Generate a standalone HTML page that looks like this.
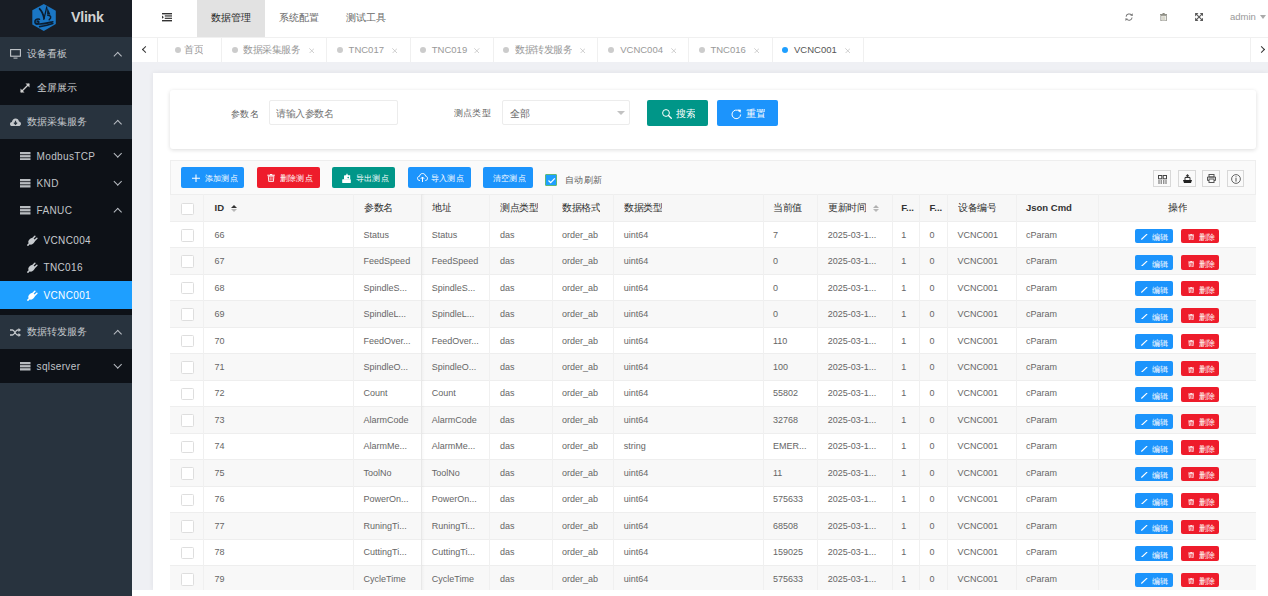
<!DOCTYPE html><html><head><meta charset="utf-8"><style>

*{box-sizing:border-box;margin:0;padding:0}
html,body{width:1268px;height:596px;overflow:hidden;background:#fff;font-family:"Liberation Sans",sans-serif}
.abs{position:absolute}
.t{position:absolute;white-space:nowrap;line-height:1}
#sb{position:absolute;left:0;top:0;width:132px;height:596px;background:#28333e}
.srow{position:absolute;left:0;width:132px}
.sico{position:absolute}
.chev{position:absolute;width:5.5px;height:5.5px;border-left:1px solid #b9bec4;border-top:1px solid #b9bec4}
.up{transform:rotate(45deg)}
.down{transform:rotate(225deg)}

</style></head><body>
<div id="sb">
<div class="abs" style="left:0;top:0;width:132px;height:37px;background:#181d25"></div>
<svg class="abs" style="left:31px;top:3px" width="26" height="29" viewBox="0 0 26 29">
<polygon points="12.8,1.1 24.8,7.85 24.8,20.9 12.8,27.9 1.3,21.4 1.3,7.35" fill="#1a76c4"/>
<g fill="none" stroke="#0b1d30" stroke-linecap="round">
<path d="M8.6,5.8 C10.6,7.8 12.2,10.8 13,15.2" stroke-width="1.8"/>
<path d="M15.7,4 C15,8 13.8,12 12.8,16.4" stroke-width="1.3"/>
<path d="M16.8,12.3 C19.6,12.6 21,14.2 18.2,16.8" stroke-width="1.5"/>
<path d="M8.4,16.2 C5.6,15.4 3.6,17.2 4,19.4 C4.4,21.2 6.8,21.4 7.6,19.6 C8,18.6 7.2,17.9 6.3,18.3" stroke-width="1.7"/>
<path d="M4.6,20.4 C9.5,22.2 15.5,20.4 21.8,18.8" stroke-width="1.7"/>
<path d="M8.6,23.6 C13.5,23.3 17.8,22 21.8,20.6" stroke-width="1.6"/>
</g>
<polygon points="16.3,4.6 19.4,11.4 16.1,11.4" fill="#0b1d30"/>
</svg>
<div class="t" style="left:71px;top:9.9px;font-size:14.3px;font-weight:bold;color:#d2d2d2;letter-spacing:-0.3px">Vlink</div>
<div class="srow" style="top:37px;height:34px;background:#28333e">
<svg class="sico" style="left:10px;top:12px" width="11" height="10" viewBox="0 0 11 10"><rect x="0.6" y="0.6" width="9.8" height="6.6" fill="none" stroke="#c4c8cc" stroke-width="1.1"/><rect x="3.5" y="8.6" width="4" height="1" fill="#c4c8cc"/></svg>
<div class="t" style="left:26.5px;top:12.3px;font-size:10px;color:#c4c8cc">设备看板</div>
<div class="chev up" style="left:115px;top:15.5px"></div>
</div>
<div class="srow" style="top:71px;height:34px;background:#0d1117">
<svg class="sico" style="left:20px;top:12px" width="10" height="10" viewBox="0 0 10 10"><path d="M1,9 L9,1" stroke="#d0d0d0" stroke-width="1.3"/><path d="M5.5,0.5 L9.5,0.5 L9.5,4.5 Z M0.5,5.5 L0.5,9.5 L4.5,9.5 Z" fill="#d0d0d0"/></svg>
<div class="t" style="left:36.5px;top:12.2px;font-size:10px;color:#d0d2d4">全屏展示</div>
</div>
<div class="srow" style="top:105px;height:34px;background:#28333e">
<svg class="sico" style="left:10px;top:117.8px;top:12.8px" width="11" height="8.2" viewBox="0 0 11 8.2"><path d="M2.4,8.2 C0.9,8.2 0,7.2 0,6 C0,4.9 0.8,4.1 1.9,4 C2.1,1.9 3.7,0.4 5.6,0.4 C7.4,0.4 8.7,1.6 9,3.4 C10.2,3.6 11,4.6 11,5.8 C11,7.2 10,8.2 8.6,8.2 Z" fill="#c4c8cc"/><path d="M5.5,2.8 L5.5,6.2 M3.9,4.7 L5.5,6.4 L7.1,4.7" stroke="#28333e" stroke-width="1.2" fill="none"/></svg>
<div class="t" style="left:26.5px;top:12.3px;font-size:10px;color:#c4c8cc">数据采集服务</div>
<div class="chev up" style="left:115px;top:15.5px"></div>
</div>
<div class="srow" style="top:139px;height:176px;background:#0d1117"></div>
<svg class="sico" style="left:20px;top:151.8px" width="10.5" height="8.5" viewBox="0 0 10.5 8.5"><rect x="0" y="0" width="10.5" height="2.3" fill="#b8bcc0"/><rect x="0" y="3.1" width="10.5" height="2.3" fill="#b8bcc0"/><rect x="0" y="6.2" width="10.5" height="2.3" fill="#b8bcc0"/></svg>
<div class="t" style="left:36.6px;top:151.60000000000002px;font-size:10px;letter-spacing:0.35px;color:#c0c4c8">ModbusTCP</div>
<div class="chev down" style="left:115px;top:151.3px"></div>
<svg class="sico" style="left:20px;top:179px" width="10.5" height="8.5" viewBox="0 0 10.5 8.5"><rect x="0" y="0" width="10.5" height="2.3" fill="#b8bcc0"/><rect x="0" y="3.1" width="10.5" height="2.3" fill="#b8bcc0"/><rect x="0" y="6.2" width="10.5" height="2.3" fill="#b8bcc0"/></svg>
<div class="t" style="left:36.6px;top:178.8px;font-size:10px;letter-spacing:0.35px;color:#c0c4c8">KND</div>
<div class="chev down" style="left:115px;top:178.5px"></div>
<svg class="sico" style="left:20px;top:206.3px" width="10.5" height="8.5" viewBox="0 0 10.5 8.5"><rect x="0" y="0" width="10.5" height="2.3" fill="#b8bcc0"/><rect x="0" y="3.1" width="10.5" height="2.3" fill="#b8bcc0"/><rect x="0" y="6.2" width="10.5" height="2.3" fill="#b8bcc0"/></svg>
<div class="t" style="left:36.6px;top:206.10000000000002px;font-size:10px;letter-spacing:0.35px;color:#c0c4c8">FANUC</div>
<div class="chev up" style="left:115px;top:208.8px"></div>
<svg class="sico" style="left:26.5px;top:235.0px" width="11" height="11" viewBox="0 0 11 11"><path d="M0.9,10.1 L3.2,7.8" stroke="#c8ccd0" stroke-width="1.5" stroke-linecap="round"/><ellipse cx="4.6" cy="6.3" rx="3.5" ry="2.8" transform="rotate(-45 4.6 6.3)" fill="#c8ccd0"/><path d="M5.4,3.8 L7.9,1.3 M7.4,5.8 L9.9,3.3" stroke="#c8ccd0" stroke-width="1.5" stroke-linecap="round"/></svg>
<div class="t" style="left:43.5px;top:236.1px;font-size:10px;letter-spacing:0.35px;color:#c8ccd0">VCNC004</div>
<svg class="sico" style="left:26.5px;top:262.0px" width="11" height="11" viewBox="0 0 11 11"><path d="M0.9,10.1 L3.2,7.8" stroke="#c8ccd0" stroke-width="1.5" stroke-linecap="round"/><ellipse cx="4.6" cy="6.3" rx="3.5" ry="2.8" transform="rotate(-45 4.6 6.3)" fill="#c8ccd0"/><path d="M5.4,3.8 L7.9,1.3 M7.4,5.8 L9.9,3.3" stroke="#c8ccd0" stroke-width="1.5" stroke-linecap="round"/></svg>
<div class="t" style="left:43.5px;top:263.1px;font-size:10px;letter-spacing:0.35px;color:#c8ccd0">TNC016</div>
<div class="srow" style="top:281px;height:28px;background:#1e9fff"></div>
<svg class="sico" style="left:26.5px;top:289.5px" width="11" height="11" viewBox="0 0 11 11"><path d="M0.9,10.1 L3.2,7.8" stroke="#ffffff" stroke-width="1.5" stroke-linecap="round"/><ellipse cx="4.6" cy="6.3" rx="3.5" ry="2.8" transform="rotate(-45 4.6 6.3)" fill="#ffffff"/><path d="M5.4,3.8 L7.9,1.3 M7.4,5.8 L9.9,3.3" stroke="#ffffff" stroke-width="1.5" stroke-linecap="round"/></svg>
<div class="t" style="left:43.5px;top:290.6px;font-size:10px;letter-spacing:0.35px;color:#fff">VCNC001</div>
<div class="srow" style="top:315px;height:34px;background:#28333e">
<svg class="sico" style="left:10px;top:12.5px" width="11" height="9" viewBox="0 0 11 9"><path d="M0,2 L2.5,2 C4.5,2 5.5,7 7.5,7 L9,7 M0,7 L2.5,7 C4.5,7 5.5,2 7.5,2 L9,2" stroke="#c4c8cc" stroke-width="1.3" fill="none"/><path d="M8.5,0 L11,2 L8.5,4 Z M8.5,5 L11,7 L8.5,9 Z" fill="#c4c8cc"/></svg>
<div class="t" style="left:26.5px;top:12.3px;font-size:10px;color:#c4c8cc">数据转发服务</div>
<div class="chev up" style="left:115px;top:15.5px"></div>
</div>
<div class="srow" style="top:349px;height:34px;background:#0d1117">
<svg class="sico" style="left:20px;top:13px" width="10.5" height="8.5" viewBox="0 0 10.5 8.5"><rect x="0" y="0" width="10.5" height="2.3" fill="#b8bcc0"/><rect x="0" y="3.1" width="10.5" height="2.3" fill="#b8bcc0"/><rect x="0" y="6.2" width="10.5" height="2.3" fill="#b8bcc0"/></svg>
<div class="t" style="left:36.6px;top:12.6px;font-size:10px;letter-spacing:0.35px;color:#c0c4c8">sqlserver</div>
<div class="chev down" style="left:115px;top:12.5px"></div>
</div>
</div>
<div class="abs" style="left:132px;top:0;width:1136px;height:38px;background:#fff;border-bottom:1px solid #f0f0f0"></div>
<svg class="abs" style="left:162px;top:13px" width="10" height="8.5" viewBox="0 0 10 8.5"><rect x="0" y="0" width="10" height="1.4" fill="#333"/><rect x="2.8" y="2.3" width="7.2" height="1.3" fill="#444"/><rect x="2.8" y="4.7" width="7.2" height="1.3" fill="#444"/><rect x="0" y="7" width="10" height="1.4" fill="#333"/><path d="M0,2.6 L1.9,4.2 L0,5.8 Z" fill="#333"/></svg>
<div class="abs" style="left:197px;top:0;width:68px;height:37px;background:#e2e2e2"></div>
<div class="t" style="left:210.5px;top:12.5px;font-size:10px;font-weight:500;color:#2a2a2a">数据管理</div>
<div class="t" style="left:278.5px;top:12.5px;font-size:10px;color:#666">系统配置</div>
<div class="t" style="left:346px;top:12.5px;font-size:10px;color:#666">测试工具</div>
<svg class="abs" style="left:1124.8px;top:12.8px" width="8.2" height="8.2" viewBox="0 0 9 9"><path d="M1.2,4 A3.4,3.4 0 0 1 7.3,2.4" stroke="#777" stroke-width="1.15" fill="none"/><path d="M7.8,5 A3.4,3.4 0 0 1 1.7,6.6" stroke="#777" stroke-width="1.15" fill="none"/><path d="M5.8,2.8 L8.6,3.2 L8.4,0.3 Z M3.2,6.2 L0.4,5.8 L0.6,8.7 Z" fill="#777"/></svg>
<svg class="abs" style="left:1160.2px;top:12.8px" width="7.2" height="8.1" viewBox="0 0 8 9"><rect x="0" y="1.2" width="8" height="1" fill="#8a8a80"/><rect x="2.8" y="0" width="2.4" height="1.5" fill="#8a8a80"/><rect x="1" y="2.6" width="6" height="6.2" fill="none" stroke="#8a8a80" stroke-width="1"/><rect x="2.3" y="3.6" width="3.4" height="4.2" fill="#d9d8cc"/></svg>
<svg class="abs" style="left:1194.6px;top:12.8px" width="8.2" height="8" viewBox="0 0 9 9"><path d="M1,1 L8,8 M8,1 L1,8" stroke="#5a5a5a" stroke-width="1.3"/><path d="M0,0 L3.8,0 L0,3.8 Z M9,0 L5.2,0 L9,3.8 Z M0,9 L3.8,9 L0,5.2 Z M9,9 L5.2,9 L9,5.2 Z" fill="#5a5a5a"/></svg>
<div class="t" style="left:1230px;top:12px;font-size:9.5px;color:#999">admin</div>
<div class="abs" style="left:1259.5px;top:14.5px;width:0;height:0;border-left:3.8px solid transparent;border-right:3.8px solid transparent;border-top:4px solid #aaa"></div>
<div class="abs" style="left:132px;top:38px;width:1136px;height:24px;background:#fff"></div>
<div class="abs" style="left:157px;top:38px;width:1px;height:24px;background:#f0f0f0"></div>
<div class="chev" style="left:142.5px;top:47px;width:5px;height:5px;border-color:#333;transform:rotate(-45deg)"></div>
<div class="abs" style="left:1250px;top:38px;width:1px;height:24px;background:#f0f0f0"></div>
<div class="chev" style="left:1259px;top:47px;width:5px;height:5px;border-color:#333;border-left:none;border-top:1px solid #333;border-right:1px solid #333;transform:rotate(45deg)"></div>
<div class="abs" style="left:221.3px;top:38px;width:1px;height:24px;background:#f0f0f0"></div>
<div class="abs" style="left:175px;top:46.6px;width:6px;height:6px;border-radius:50%;background:#ccc"></div>
<div class="t" style="left:183.79999999999998px;top:45px;font-size:10px;color:#999;transform:scale(0.9500);transform-origin:0 0">首页</div>
<div class="abs" style="left:326.4px;top:38px;width:1px;height:24px;background:#f0f0f0"></div>
<div class="abs" style="left:232px;top:46.6px;width:6px;height:6px;border-radius:50%;background:#ccc"></div>
<div class="t" style="left:243.0px;top:45px;font-size:10px;color:#999;transform:scale(0.9500);transform-origin:0 0">数据采集服务</div>
<svg class="abs" style="left:308.7px;top:47.6px" width="5.6" height="5.6" viewBox="0 0 5.6 5.6"><path d="M0.3,0.3 L5.3,5.3 M5.3,0.3 L0.3,5.3" stroke="#c4c4c4" stroke-width="0.8"/></svg>
<div class="abs" style="left:410px;top:38px;width:1px;height:24px;background:#f0f0f0"></div>
<div class="abs" style="left:337px;top:46.6px;width:6px;height:6px;border-radius:50%;background:#ccc"></div>
<div class="t" style="left:348.59999999999997px;top:45px;font-size:9.5px;color:#999">TNC017</div>
<svg class="abs" style="left:391.59999999999997px;top:47.6px" width="5.6" height="5.6" viewBox="0 0 5.6 5.6"><path d="M0.3,0.3 L5.3,5.3 M5.3,0.3 L0.3,5.3" stroke="#c4c4c4" stroke-width="0.8"/></svg>
<div class="abs" style="left:492.7px;top:38px;width:1px;height:24px;background:#f0f0f0"></div>
<div class="abs" style="left:420.3px;top:46.6px;width:6px;height:6px;border-radius:50%;background:#ccc"></div>
<div class="t" style="left:431.8px;top:45px;font-size:9.5px;color:#999">TNC019</div>
<svg class="abs" style="left:474.2px;top:47.6px" width="5.6" height="5.6" viewBox="0 0 5.6 5.6"><path d="M0.3,0.3 L5.3,5.3 M5.3,0.3 L0.3,5.3" stroke="#c4c4c4" stroke-width="0.8"/></svg>
<div class="abs" style="left:597.4px;top:38px;width:1px;height:24px;background:#f0f0f0"></div>
<div class="abs" style="left:503.2px;top:46.6px;width:6px;height:6px;border-radius:50%;background:#ccc"></div>
<div class="t" style="left:514.5px;top:45px;font-size:10px;color:#999;transform:scale(0.9500);transform-origin:0 0">数据转发服务</div>
<svg class="abs" style="left:579.7px;top:47.6px" width="5.6" height="5.6" viewBox="0 0 5.6 5.6"><path d="M0.3,0.3 L5.3,5.3 M5.3,0.3 L0.3,5.3" stroke="#c4c4c4" stroke-width="0.8"/></svg>
<div class="abs" style="left:688.2px;top:38px;width:1px;height:24px;background:#f0f0f0"></div>
<div class="abs" style="left:608.2px;top:46.6px;width:6px;height:6px;border-radius:50%;background:#ccc"></div>
<div class="t" style="left:620.2px;top:45px;font-size:9.5px;color:#999">VCNC004</div>
<svg class="abs" style="left:670.6px;top:47.6px" width="5.6" height="5.6" viewBox="0 0 5.6 5.6"><path d="M0.3,0.3 L5.3,5.3 M5.3,0.3 L0.3,5.3" stroke="#c4c4c4" stroke-width="0.8"/></svg>
<div class="abs" style="left:771.8px;top:38px;width:1px;height:24px;background:#f0f0f0"></div>
<div class="abs" style="left:699px;top:46.6px;width:6px;height:6px;border-radius:50%;background:#ccc"></div>
<div class="t" style="left:710.4000000000001px;top:45px;font-size:9.5px;color:#999">TNC016</div>
<svg class="abs" style="left:753.8000000000001px;top:47.6px" width="5.6" height="5.6" viewBox="0 0 5.6 5.6"><path d="M0.3,0.3 L5.3,5.3 M5.3,0.3 L0.3,5.3" stroke="#c4c4c4" stroke-width="0.8"/></svg>
<div class="abs" style="left:862.6px;top:38px;width:1px;height:24px;background:#f0f0f0"></div>
<div class="abs" style="left:782.4px;top:46.6px;width:6px;height:6px;border-radius:50%;background:#1e9fff"></div>
<div class="t" style="left:794.0px;top:45px;font-size:9.5px;color:#555">VCNC001</div>
<svg class="abs" style="left:844.7px;top:47.6px" width="5.6" height="5.6" viewBox="0 0 5.6 5.6"><path d="M0.3,0.3 L5.3,5.3 M5.3,0.3 L0.3,5.3" stroke="#c4c4c4" stroke-width="0.8"/></svg>
<div class="abs" style="left:132px;top:62px;width:1136px;height:528px;background:#eff0f4"></div>
<div class="abs" style="left:153px;top:73px;width:1115px;height:517px;background:#fff;box-shadow:0 0 5px rgba(0,10,40,0.07)"></div>
<div class="abs" style="left:170px;top:90px;width:1086px;height:59px;background:#fff;border-radius:3px;box-shadow:0 1px 4px rgba(0,0,0,0.14)"></div>
<div class="t" style="left:230.5px;top:109px;font-size:10px;color:#606060;transform:scale(0.9400);transform-origin:0 0">参数名</div>
<div class="abs" style="left:269px;top:100.3px;width:128.5px;height:25px;border:1px solid #ececec;border-radius:2px;background:#fff"></div>
<div class="t" style="left:276px;top:108.6px;font-size:10px;color:#757575;transform:scale(0.9500);transform-origin:0 0">请输入参数名</div>
<div class="t" style="left:453.6px;top:109px;font-size:10px;color:#606060;transform:scale(0.9200);transform-origin:0 0">测点类型</div>
<div class="abs" style="left:502.3px;top:100.3px;width:128px;height:25px;border:1px solid #ececec;border-radius:2px;background:#fff"></div>
<div class="t" style="left:509.5px;top:108.6px;font-size:10px;color:#666;transform:scale(0.9600);transform-origin:0 0">全部</div>
<div class="abs" style="left:616.5px;top:111px;width:0;height:0;border-left:4px solid transparent;border-right:4px solid transparent;border-top:4.5px solid #c2c2c2"></div>
<div class="abs" style="left:647.1px;top:100.1px;width:60.6px;height:25.8px;background:#009688;border-radius:2px"></div>
<svg class="abs" style="left:661.5px;top:108.6px" width="10" height="10" viewBox="0 0 10 10"><circle cx="4" cy="4" r="3.4" fill="none" stroke="#fff" stroke-width="1"/><path d="M6.5,6.5 L9.3,9.3" stroke="#fff" stroke-width="1.3" stroke-linecap="round"/></svg>
<div class="t" style="left:675.8px;top:108.8px;font-size:10px;color:#fff;transform:scale(0.9500);transform-origin:0 0">搜索</div>
<div class="abs" style="left:716.8px;top:100.1px;width:61px;height:25.8px;background:#1c94fc;border-radius:2px"></div>
<svg class="abs" style="left:731.2px;top:108.8px" width="11" height="11" viewBox="0 0 11 11"><path d="M9.6,5.5 A4.3,4.3 0 1 1 8.3,2.3" stroke="#fff" stroke-width="1" fill="none"/><path d="M6.6,0.6 L10,0.8 L9.4,4 Z" fill="#fff"/></svg>
<div class="t" style="left:746.2px;top:108.8px;font-size:10px;color:#fff;transform:scale(0.9500);transform-origin:0 0">重置</div>
<div class="abs" style="left:170.3px;top:160.2px;width:1085.7px;height:34px;background:#fafafa;border:1px solid #eeeeee;border-bottom:none"></div>
<div class="abs" style="left:181px;top:167.3px;width:63.30000000000001px;height:20.7px;background:#1c94fc;border-radius:2px"></div>
<svg class="abs" style="left:191.7px;top:173.8px" width="8" height="8" viewBox="0 0 8 8"><path d="M4,0.5 L4,8 M0,4.2 L8,4.2" stroke="#fff" stroke-width="1.05"/></svg>
<div class="t" style="left:205px;top:174.8px;font-size:9px;font-weight:500;color:#fff;transform:scale(0.9111);transform-origin:0 0">添加测点</div>
<div class="abs" style="left:256.6px;top:167.3px;width:63.5px;height:20.7px;background:#ee1c2b;border-radius:2px"></div>
<svg class="abs" style="left:266.6px;top:174px" width="8.2" height="8" viewBox="0 0 8.2 8"><path d="M0.3,1.2 L7.9,1.2" stroke="#fff" stroke-width="1"/><rect x="3" y="0" width="2.2" height="1" fill="#fff"/><path d="M1.3,2.2 L6.9,2.2 L6.4,7.6 L1.8,7.6 Z" fill="none" stroke="#fff" stroke-width="0.9"/><path d="M3.2,3.2 L3.2,6.6 M5,3.2 L5,6.6" stroke="#fff" stroke-width="0.7"/></svg>
<div class="t" style="left:279.8px;top:174.8px;font-size:9px;font-weight:500;color:#fff;transform:scale(0.9111);transform-origin:0 0">删除测点</div>
<div class="abs" style="left:332.4px;top:167.3px;width:63.0px;height:20.7px;background:#009688;border-radius:2px"></div>
<svg class="abs" style="left:342px;top:172.8px" width="9" height="10" viewBox="0 0 9 10"><rect x="0.2" y="6.2" width="8.6" height="3.8" rx="0.6" fill="#fff"/><path d="M2,6.4 L2,3.2 C2,2.6 2.4,2.2 3,2.2 L4,2.2 L5,0.3 L6,2.2 L8.2,2.2 L8.2,6.4 Z" fill="#fff"/><circle cx="6.2" cy="4.6" r="0.8" fill="#009688"/></svg>
<div class="t" style="left:355.5px;top:174.8px;font-size:9px;font-weight:500;color:#fff;transform:scale(0.9111);transform-origin:0 0">导出测点</div>
<div class="abs" style="left:407.8px;top:167.3px;width:62.80000000000001px;height:20.7px;background:#1c94fc;border-radius:2px"></div>
<svg class="abs" style="left:416.5px;top:173.3px" width="11" height="9" viewBox="0 0 11 9"><path d="M3,7.5 C1.3,7.5 0.5,6.5 0.5,5.3 C0.5,4 1.5,3.3 2.5,3.3 C2.8,1.5 4.1,0.5 5.6,0.5 C7.3,0.5 8.4,1.7 8.6,3.1 C9.7,3.2 10.5,4.1 10.5,5.3 C10.5,6.6 9.6,7.5 8.3,7.5" fill="none" stroke="#fff" stroke-width="1"/><path d="M5.5,4 L5.5,9 M3.8,5.8 L5.5,4 L7.2,5.8" stroke="#fff" stroke-width="1" fill="none"/></svg>
<div class="t" style="left:430.9px;top:174.8px;font-size:9px;font-weight:500;color:#fff;transform:scale(0.9111);transform-origin:0 0">导入测点</div>
<div class="abs" style="left:482.9px;top:167.3px;width:50.200000000000045px;height:20.7px;background:#1c94fc;border-radius:2px"></div>

<div class="t" style="left:493.3px;top:174.8px;font-size:9px;font-weight:500;color:#fff;transform:scale(0.9111);transform-origin:0 0">清空测点</div>
<div class="abs" style="left:545.4px;top:174.4px;width:12px;height:12px;background:#1e9fff;border:1px solid #5fb878;border-radius:1px"></div>
<svg class="abs" style="left:547px;top:176px" width="9" height="9" viewBox="0 0 9 9"><path d="M1.5,4.5 L3.7,6.7 L7.8,2.3" stroke="#fff" stroke-width="1.2" fill="none"/></svg>
<div class="t" style="left:564.8px;top:176.4px;font-size:10px;color:#5a5a5a;transform:scale(0.9300);transform-origin:0 0">自动刷新</div>
<div class="abs" style="left:1153.3px;top:170.2px;width:17.5px;height:17.3px;border:1px solid #d8d8d8;background:#fafafa"></div>
<div class="abs" style="left:1178.1px;top:170.2px;width:17.5px;height:17.3px;border:1px solid #d8d8d8;background:#fafafa"></div>
<div class="abs" style="left:1202.1px;top:170.2px;width:17.5px;height:17.3px;border:1px solid #d8d8d8;background:#fafafa"></div>
<div class="abs" style="left:1226.9px;top:170.2px;width:17.5px;height:17.3px;border:1px solid #d8d8d8;background:#fafafa"></div>
<svg class="abs" style="left:1158px;top:174.8px" width="9" height="9" viewBox="0 0 9 9"><rect x="0.5" y="0.5" width="3.3" height="3.3" fill="none" stroke="#444" stroke-width="1"/><rect x="5.2" y="0.5" width="3.3" height="3.3" fill="none" stroke="#444" stroke-width="1"/><path d="M1,5 L1,9 M3.2,5 L3.2,9 M5.8,5 L5.8,9 M8,5 L8,9" stroke="#555" stroke-width="0.9"/></svg>
<svg class="abs" style="left:1182.5px;top:174.3px" width="9" height="9" viewBox="0 0 9 9"><path d="M0,6 L9,6 L8,9 L1,9 Z" fill="#222"/><path d="M2,6 L2,3.5 L7,3.5 L7,6" fill="none" stroke="#333" stroke-width="1"/><path d="M4.5,0 L6.5,2.3 L5.2,2.3 L5.2,4 L3.8,4 L3.8,2.3 L2.5,2.3 Z" fill="#333"/></svg>
<svg class="abs" style="left:1206.5px;top:174.3px" width="9" height="9" viewBox="0 0 9 9"><rect x="2" y="0.5" width="5" height="2.5" fill="none" stroke="#555" stroke-width="1"/><path d="M2,6.5 L0.5,6.5 L0.5,3 L8.5,3 L8.5,6.5 L7,6.5" fill="none" stroke="#555" stroke-width="1"/><rect x="2" y="5" width="5" height="3.5" fill="none" stroke="#555" stroke-width="1"/></svg>
<svg class="abs" style="left:1230.8px;top:174px" width="10" height="10" viewBox="0 0 10 10"><circle cx="5" cy="5" r="4.4" fill="none" stroke="#555" stroke-width="0.9"/><rect x="4.5" y="4" width="1" height="3.6" fill="#555"/><rect x="4.5" y="2.3" width="1" height="1" fill="#555"/></svg>
<div class="abs" style="left:170.3px;top:194px;width:1085.7px;height:402px;border-left:1px solid #eee;border-right:1px solid #eee"></div>
<div class="abs" style="left:170.3px;top:194px;width:1085.7px;height:27px;background:#f7f7f7;border-top:1px solid #eee"></div>
<div class="abs" style="left:170.3px;top:221.0px;width:1085.7px;height:26.46px;background:#fff;border-top:1px solid #eee"></div>
<div class="abs" style="left:170.3px;top:247.46px;width:1085.7px;height:26.46px;background:#f8f8f8;border-top:1px solid #eee"></div>
<div class="abs" style="left:170.3px;top:273.92px;width:1085.7px;height:26.46px;background:#fff;border-top:1px solid #eee"></div>
<div class="abs" style="left:170.3px;top:300.38px;width:1085.7px;height:26.46px;background:#f8f8f8;border-top:1px solid #eee"></div>
<div class="abs" style="left:170.3px;top:326.84000000000003px;width:1085.7px;height:26.46px;background:#fff;border-top:1px solid #eee"></div>
<div class="abs" style="left:170.3px;top:353.3px;width:1085.7px;height:26.46px;background:#f8f8f8;border-top:1px solid #eee"></div>
<div class="abs" style="left:170.3px;top:379.76px;width:1085.7px;height:26.46px;background:#fff;border-top:1px solid #eee"></div>
<div class="abs" style="left:170.3px;top:406.22px;width:1085.7px;height:26.46px;background:#f8f8f8;border-top:1px solid #eee"></div>
<div class="abs" style="left:170.3px;top:432.68px;width:1085.7px;height:26.46px;background:#fff;border-top:1px solid #eee"></div>
<div class="abs" style="left:170.3px;top:459.14px;width:1085.7px;height:26.46px;background:#f8f8f8;border-top:1px solid #eee"></div>
<div class="abs" style="left:170.3px;top:485.6px;width:1085.7px;height:26.46px;background:#fff;border-top:1px solid #eee"></div>
<div class="abs" style="left:170.3px;top:512.06px;width:1085.7px;height:26.46px;background:#f8f8f8;border-top:1px solid #eee"></div>
<div class="abs" style="left:170.3px;top:538.52px;width:1085.7px;height:26.46px;background:#fff;border-top:1px solid #eee"></div>
<div class="abs" style="left:170.3px;top:564.98px;width:1085.7px;height:25.019999999999982px;background:#f8f8f8;border-top:1px solid #eee"></div>
<div class="abs" style="left:203px;top:194px;width:1px;height:396px;background:#f0f0f0"></div>
<div class="abs" style="left:353px;top:194px;width:1px;height:396px;background:#f0f0f0"></div>
<div class="abs" style="left:421px;top:194px;width:1px;height:396px;background:#f0f0f0"></div>
<div class="abs" style="left:489.3px;top:194px;width:1px;height:396px;background:#f0f0f0"></div>
<div class="abs" style="left:551.7px;top:194px;width:1px;height:396px;background:#f0f0f0"></div>
<div class="abs" style="left:613.2px;top:194px;width:1px;height:396px;background:#f0f0f0"></div>
<div class="abs" style="left:762.5px;top:194px;width:1px;height:396px;background:#f0f0f0"></div>
<div class="abs" style="left:817px;top:194px;width:1px;height:396px;background:#f0f0f0"></div>
<div class="abs" style="left:891.8px;top:194px;width:1px;height:396px;background:#f0f0f0"></div>
<div class="abs" style="left:919.2px;top:194px;width:1px;height:396px;background:#f0f0f0"></div>
<div class="abs" style="left:947.2px;top:194px;width:1px;height:396px;background:#f0f0f0"></div>
<div class="abs" style="left:1015.5px;top:194px;width:1px;height:396px;background:#f0f0f0"></div>
<div class="abs" style="left:1097.8px;top:194px;width:1px;height:396px;background:#f0f0f0"></div>
<div class="abs" style="left:421px;top:194px;width:4px;height:396px;background:linear-gradient(to right,rgba(0,0,0,0.04),rgba(0,0,0,0))"></div>
<div class="abs" style="left:181px;top:202.5px;width:12.7px;height:12.5px;border:1px solid #dedede;background:#fff;border-radius:1.5px"></div>
<div class="t" style="left:214.6px;top:202.5px;font-size:9.5px;font-weight:bold;color:#333">ID</div>
<div class="t" style="left:363.6px;top:202.5px;font-size:10px;font-weight:500;color:#333;transform:scale(0.9500);transform-origin:0 0">参数名</div>
<div class="t" style="left:431.8px;top:202.5px;font-size:10px;font-weight:500;color:#333;transform:scale(0.9500);transform-origin:0 0">地址</div>
<div class="t" style="left:499.9px;top:202.5px;font-size:10px;font-weight:500;color:#333;transform:scale(0.9500);transform-origin:0 0">测点类型</div>
<div class="t" style="left:562px;top:202.5px;font-size:10px;font-weight:500;color:#333;transform:scale(0.9500);transform-origin:0 0">数据格式</div>
<div class="t" style="left:623.7px;top:202.5px;font-size:10px;font-weight:500;color:#333;transform:scale(0.9500);transform-origin:0 0">数据类型</div>
<div class="t" style="left:772.9px;top:202.5px;font-size:10px;font-weight:500;color:#333;transform:scale(0.9500);transform-origin:0 0">当前值</div>
<div class="t" style="left:827.8px;top:202.5px;font-size:10px;font-weight:500;color:#333;transform:scale(0.9500);transform-origin:0 0">更新时间</div>
<div class="t" style="left:901.3px;top:202.5px;font-size:9.5px;font-weight:bold;color:#333">F...</div>
<div class="t" style="left:929.6px;top:202.5px;font-size:9.5px;font-weight:bold;color:#333">F...</div>
<div class="t" style="left:957.6px;top:202.5px;font-size:10px;font-weight:500;color:#333;transform:scale(0.9500);transform-origin:0 0">设备编号</div>
<div class="t" style="left:1026px;top:202.5px;font-size:9.5px;font-weight:bold;color:#333">Json Cmd</div>
<div class="t" style="left:1167.5px;top:202.5px;font-size:10px;font-weight:500;color:#333;transform:scale(0.9500);transform-origin:0 0">操作</div>
<div class="abs" style="left:231px;top:204.5px;width:0;height:0;border-left:3.3px solid transparent;border-right:3.3px solid transparent;border-bottom:3.5px solid #333"></div>
<div class="abs" style="left:231px;top:208.8px;width:0;height:0;border-left:3.3px solid transparent;border-right:3.3px solid transparent;border-top:3.5px solid #b8b8b8"></div>
<div class="abs" style="left:872.5px;top:204.5px;width:0;height:0;border-left:3.3px solid transparent;border-right:3.3px solid transparent;border-bottom:3.5px solid #b0b0b0"></div>
<div class="abs" style="left:872.5px;top:208.8px;width:0;height:0;border-left:3.3px solid transparent;border-right:3.3px solid transparent;border-top:3.5px solid #b8b8b8"></div>
<div class="abs" style="left:181.3px;top:229.03px;width:12.7px;height:12.5px;border:1px solid #dedede;background:#fff;border-radius:1.5px"></div>
<div class="t" style="left:214.6px;top:230.73px;font-size:9px;color:#666">66</div>
<div class="t" style="left:363.6px;top:230.73px;font-size:9px;color:#666">Status</div>
<div class="t" style="left:431.8px;top:230.73px;font-size:9px;color:#666">Status</div>
<div class="t" style="left:499.9px;top:230.73px;font-size:9px;color:#666">das</div>
<div class="t" style="left:562px;top:230.73px;font-size:9px;color:#666">order_ab</div>
<div class="t" style="left:623.7px;top:230.73px;font-size:9px;color:#666">uint64</div>
<div class="t" style="left:772.9px;top:230.73px;font-size:9px;color:#666">7</div>
<div class="t" style="left:827.8px;top:230.73px;font-size:9px;color:#666">2025-03-1...</div>
<div class="t" style="left:901.3px;top:230.73px;font-size:9px;color:#666">1</div>
<div class="t" style="left:929.6px;top:230.73px;font-size:9px;color:#666">0</div>
<div class="t" style="left:957.6px;top:230.73px;font-size:9px;color:#666">VCNC001</div>
<div class="t" style="left:1026px;top:230.73px;font-size:9px;color:#666">cParam</div>
<div class="abs" style="left:1134.5px;top:228.53px;width:38px;height:14.8px;background:#1c94fc;border-radius:2px"></div>
<svg class="abs" style="left:1141px;top:234.33px" width="6.5" height="5.5" viewBox="0 0 6.5 5.5"><path d="M0.6,5.2 L5.8,0.4" stroke="#fff" stroke-width="1.2" stroke-linecap="round"/></svg>
<div class="t" style="left:1152px;top:234.13px;font-size:9px;font-weight:500;color:#fff;transform:scale(0.9222);transform-origin:0 0">编辑</div>
<div class="abs" style="left:1181.3px;top:228.53px;width:38px;height:14.8px;background:#ee1c2b;border-radius:2px"></div>
<svg class="abs" style="left:1187.7px;top:234.33px" width="6.4" height="6" viewBox="0 0 6.4 6"><path d="M0.2,1 L6.2,1" stroke="#fff" stroke-width="0.9"/><rect x="2.3" y="0" width="1.8" height="0.8" fill="#fff"/><path d="M1,1.8 L5.4,1.8 L5,6 L1.4,6 Z" fill="none" stroke="#fff" stroke-width="0.8"/><path d="M2.5,2.6 L2.5,5.2 M3.9,2.6 L3.9,5.2" stroke="#fff" stroke-width="0.6"/></svg>
<div class="t" style="left:1198.7px;top:234.13px;font-size:9px;font-weight:500;color:#fff;transform:scale(0.9222);transform-origin:0 0">删除</div>
<div class="abs" style="left:181.3px;top:255.49px;width:12.7px;height:12.5px;border:1px solid #dedede;background:#fff;border-radius:1.5px"></div>
<div class="t" style="left:214.6px;top:257.19px;font-size:9px;color:#666">67</div>
<div class="t" style="left:363.6px;top:257.19px;font-size:9px;color:#666">FeedSpeed</div>
<div class="t" style="left:431.8px;top:257.19px;font-size:9px;color:#666">FeedSpeed</div>
<div class="t" style="left:499.9px;top:257.19px;font-size:9px;color:#666">das</div>
<div class="t" style="left:562px;top:257.19px;font-size:9px;color:#666">order_ab</div>
<div class="t" style="left:623.7px;top:257.19px;font-size:9px;color:#666">uint64</div>
<div class="t" style="left:772.9px;top:257.19px;font-size:9px;color:#666">0</div>
<div class="t" style="left:827.8px;top:257.19px;font-size:9px;color:#666">2025-03-1...</div>
<div class="t" style="left:901.3px;top:257.19px;font-size:9px;color:#666">1</div>
<div class="t" style="left:929.6px;top:257.19px;font-size:9px;color:#666">0</div>
<div class="t" style="left:957.6px;top:257.19px;font-size:9px;color:#666">VCNC001</div>
<div class="t" style="left:1026px;top:257.19px;font-size:9px;color:#666">cParam</div>
<div class="abs" style="left:1134.5px;top:254.99px;width:38px;height:14.8px;background:#1c94fc;border-radius:2px"></div>
<svg class="abs" style="left:1141px;top:260.79px" width="6.5" height="5.5" viewBox="0 0 6.5 5.5"><path d="M0.6,5.2 L5.8,0.4" stroke="#fff" stroke-width="1.2" stroke-linecap="round"/></svg>
<div class="t" style="left:1152px;top:260.59000000000003px;font-size:9px;font-weight:500;color:#fff;transform:scale(0.9222);transform-origin:0 0">编辑</div>
<div class="abs" style="left:1181.3px;top:254.99px;width:38px;height:14.8px;background:#ee1c2b;border-radius:2px"></div>
<svg class="abs" style="left:1187.7px;top:260.79px" width="6.4" height="6" viewBox="0 0 6.4 6"><path d="M0.2,1 L6.2,1" stroke="#fff" stroke-width="0.9"/><rect x="2.3" y="0" width="1.8" height="0.8" fill="#fff"/><path d="M1,1.8 L5.4,1.8 L5,6 L1.4,6 Z" fill="none" stroke="#fff" stroke-width="0.8"/><path d="M2.5,2.6 L2.5,5.2 M3.9,2.6 L3.9,5.2" stroke="#fff" stroke-width="0.6"/></svg>
<div class="t" style="left:1198.7px;top:260.59000000000003px;font-size:9px;font-weight:500;color:#fff;transform:scale(0.9222);transform-origin:0 0">删除</div>
<div class="abs" style="left:181.3px;top:281.95000000000005px;width:12.7px;height:12.5px;border:1px solid #dedede;background:#fff;border-radius:1.5px"></div>
<div class="t" style="left:214.6px;top:283.65000000000003px;font-size:9px;color:#666">68</div>
<div class="t" style="left:363.6px;top:283.65000000000003px;font-size:9px;color:#666">SpindleS...</div>
<div class="t" style="left:431.8px;top:283.65000000000003px;font-size:9px;color:#666">SpindleS...</div>
<div class="t" style="left:499.9px;top:283.65000000000003px;font-size:9px;color:#666">das</div>
<div class="t" style="left:562px;top:283.65000000000003px;font-size:9px;color:#666">order_ab</div>
<div class="t" style="left:623.7px;top:283.65000000000003px;font-size:9px;color:#666">uint64</div>
<div class="t" style="left:772.9px;top:283.65000000000003px;font-size:9px;color:#666">0</div>
<div class="t" style="left:827.8px;top:283.65000000000003px;font-size:9px;color:#666">2025-03-1...</div>
<div class="t" style="left:901.3px;top:283.65000000000003px;font-size:9px;color:#666">1</div>
<div class="t" style="left:929.6px;top:283.65000000000003px;font-size:9px;color:#666">0</div>
<div class="t" style="left:957.6px;top:283.65000000000003px;font-size:9px;color:#666">VCNC001</div>
<div class="t" style="left:1026px;top:283.65000000000003px;font-size:9px;color:#666">cParam</div>
<div class="abs" style="left:1134.5px;top:281.45000000000005px;width:38px;height:14.8px;background:#1c94fc;border-radius:2px"></div>
<svg class="abs" style="left:1141px;top:287.25000000000006px" width="6.5" height="5.5" viewBox="0 0 6.5 5.5"><path d="M0.6,5.2 L5.8,0.4" stroke="#fff" stroke-width="1.2" stroke-linecap="round"/></svg>
<div class="t" style="left:1152px;top:287.05000000000007px;font-size:9px;font-weight:500;color:#fff;transform:scale(0.9222);transform-origin:0 0">编辑</div>
<div class="abs" style="left:1181.3px;top:281.45000000000005px;width:38px;height:14.8px;background:#ee1c2b;border-radius:2px"></div>
<svg class="abs" style="left:1187.7px;top:287.25000000000006px" width="6.4" height="6" viewBox="0 0 6.4 6"><path d="M0.2,1 L6.2,1" stroke="#fff" stroke-width="0.9"/><rect x="2.3" y="0" width="1.8" height="0.8" fill="#fff"/><path d="M1,1.8 L5.4,1.8 L5,6 L1.4,6 Z" fill="none" stroke="#fff" stroke-width="0.8"/><path d="M2.5,2.6 L2.5,5.2 M3.9,2.6 L3.9,5.2" stroke="#fff" stroke-width="0.6"/></svg>
<div class="t" style="left:1198.7px;top:287.05000000000007px;font-size:9px;font-weight:500;color:#fff;transform:scale(0.9222);transform-origin:0 0">删除</div>
<div class="abs" style="left:181.3px;top:308.41px;width:12.7px;height:12.5px;border:1px solid #dedede;background:#fff;border-radius:1.5px"></div>
<div class="t" style="left:214.6px;top:310.11px;font-size:9px;color:#666">69</div>
<div class="t" style="left:363.6px;top:310.11px;font-size:9px;color:#666">SpindleL...</div>
<div class="t" style="left:431.8px;top:310.11px;font-size:9px;color:#666">SpindleL...</div>
<div class="t" style="left:499.9px;top:310.11px;font-size:9px;color:#666">das</div>
<div class="t" style="left:562px;top:310.11px;font-size:9px;color:#666">order_ab</div>
<div class="t" style="left:623.7px;top:310.11px;font-size:9px;color:#666">uint64</div>
<div class="t" style="left:772.9px;top:310.11px;font-size:9px;color:#666">0</div>
<div class="t" style="left:827.8px;top:310.11px;font-size:9px;color:#666">2025-03-1...</div>
<div class="t" style="left:901.3px;top:310.11px;font-size:9px;color:#666">1</div>
<div class="t" style="left:929.6px;top:310.11px;font-size:9px;color:#666">0</div>
<div class="t" style="left:957.6px;top:310.11px;font-size:9px;color:#666">VCNC001</div>
<div class="t" style="left:1026px;top:310.11px;font-size:9px;color:#666">cParam</div>
<div class="abs" style="left:1134.5px;top:307.91px;width:38px;height:14.8px;background:#1c94fc;border-radius:2px"></div>
<svg class="abs" style="left:1141px;top:313.71000000000004px" width="6.5" height="5.5" viewBox="0 0 6.5 5.5"><path d="M0.6,5.2 L5.8,0.4" stroke="#fff" stroke-width="1.2" stroke-linecap="round"/></svg>
<div class="t" style="left:1152px;top:313.51000000000005px;font-size:9px;font-weight:500;color:#fff;transform:scale(0.9222);transform-origin:0 0">编辑</div>
<div class="abs" style="left:1181.3px;top:307.91px;width:38px;height:14.8px;background:#ee1c2b;border-radius:2px"></div>
<svg class="abs" style="left:1187.7px;top:313.71000000000004px" width="6.4" height="6" viewBox="0 0 6.4 6"><path d="M0.2,1 L6.2,1" stroke="#fff" stroke-width="0.9"/><rect x="2.3" y="0" width="1.8" height="0.8" fill="#fff"/><path d="M1,1.8 L5.4,1.8 L5,6 L1.4,6 Z" fill="none" stroke="#fff" stroke-width="0.8"/><path d="M2.5,2.6 L2.5,5.2 M3.9,2.6 L3.9,5.2" stroke="#fff" stroke-width="0.6"/></svg>
<div class="t" style="left:1198.7px;top:313.51000000000005px;font-size:9px;font-weight:500;color:#fff;transform:scale(0.9222);transform-origin:0 0">删除</div>
<div class="abs" style="left:181.3px;top:334.87000000000006px;width:12.7px;height:12.5px;border:1px solid #dedede;background:#fff;border-radius:1.5px"></div>
<div class="t" style="left:214.6px;top:336.57000000000005px;font-size:9px;color:#666">70</div>
<div class="t" style="left:363.6px;top:336.57000000000005px;font-size:9px;color:#666">FeedOver...</div>
<div class="t" style="left:431.8px;top:336.57000000000005px;font-size:9px;color:#666">FeedOver...</div>
<div class="t" style="left:499.9px;top:336.57000000000005px;font-size:9px;color:#666">das</div>
<div class="t" style="left:562px;top:336.57000000000005px;font-size:9px;color:#666">order_ab</div>
<div class="t" style="left:623.7px;top:336.57000000000005px;font-size:9px;color:#666">uint64</div>
<div class="t" style="left:772.9px;top:336.57000000000005px;font-size:9px;color:#666">110</div>
<div class="t" style="left:827.8px;top:336.57000000000005px;font-size:9px;color:#666">2025-03-1...</div>
<div class="t" style="left:901.3px;top:336.57000000000005px;font-size:9px;color:#666">1</div>
<div class="t" style="left:929.6px;top:336.57000000000005px;font-size:9px;color:#666">0</div>
<div class="t" style="left:957.6px;top:336.57000000000005px;font-size:9px;color:#666">VCNC001</div>
<div class="t" style="left:1026px;top:336.57000000000005px;font-size:9px;color:#666">cParam</div>
<div class="abs" style="left:1134.5px;top:334.37000000000006px;width:38px;height:14.8px;background:#1c94fc;border-radius:2px"></div>
<svg class="abs" style="left:1141px;top:340.1700000000001px" width="6.5" height="5.5" viewBox="0 0 6.5 5.5"><path d="M0.6,5.2 L5.8,0.4" stroke="#fff" stroke-width="1.2" stroke-linecap="round"/></svg>
<div class="t" style="left:1152px;top:339.9700000000001px;font-size:9px;font-weight:500;color:#fff;transform:scale(0.9222);transform-origin:0 0">编辑</div>
<div class="abs" style="left:1181.3px;top:334.37000000000006px;width:38px;height:14.8px;background:#ee1c2b;border-radius:2px"></div>
<svg class="abs" style="left:1187.7px;top:340.1700000000001px" width="6.4" height="6" viewBox="0 0 6.4 6"><path d="M0.2,1 L6.2,1" stroke="#fff" stroke-width="0.9"/><rect x="2.3" y="0" width="1.8" height="0.8" fill="#fff"/><path d="M1,1.8 L5.4,1.8 L5,6 L1.4,6 Z" fill="none" stroke="#fff" stroke-width="0.8"/><path d="M2.5,2.6 L2.5,5.2 M3.9,2.6 L3.9,5.2" stroke="#fff" stroke-width="0.6"/></svg>
<div class="t" style="left:1198.7px;top:339.9700000000001px;font-size:9px;font-weight:500;color:#fff;transform:scale(0.9222);transform-origin:0 0">删除</div>
<div class="abs" style="left:181.3px;top:361.33000000000004px;width:12.7px;height:12.5px;border:1px solid #dedede;background:#fff;border-radius:1.5px"></div>
<div class="t" style="left:214.6px;top:363.03000000000003px;font-size:9px;color:#666">71</div>
<div class="t" style="left:363.6px;top:363.03000000000003px;font-size:9px;color:#666">SpindleO...</div>
<div class="t" style="left:431.8px;top:363.03000000000003px;font-size:9px;color:#666">SpindleO...</div>
<div class="t" style="left:499.9px;top:363.03000000000003px;font-size:9px;color:#666">das</div>
<div class="t" style="left:562px;top:363.03000000000003px;font-size:9px;color:#666">order_ab</div>
<div class="t" style="left:623.7px;top:363.03000000000003px;font-size:9px;color:#666">uint64</div>
<div class="t" style="left:772.9px;top:363.03000000000003px;font-size:9px;color:#666">100</div>
<div class="t" style="left:827.8px;top:363.03000000000003px;font-size:9px;color:#666">2025-03-1...</div>
<div class="t" style="left:901.3px;top:363.03000000000003px;font-size:9px;color:#666">1</div>
<div class="t" style="left:929.6px;top:363.03000000000003px;font-size:9px;color:#666">0</div>
<div class="t" style="left:957.6px;top:363.03000000000003px;font-size:9px;color:#666">VCNC001</div>
<div class="t" style="left:1026px;top:363.03000000000003px;font-size:9px;color:#666">cParam</div>
<div class="abs" style="left:1134.5px;top:360.83000000000004px;width:38px;height:14.8px;background:#1c94fc;border-radius:2px"></div>
<svg class="abs" style="left:1141px;top:366.63000000000005px" width="6.5" height="5.5" viewBox="0 0 6.5 5.5"><path d="M0.6,5.2 L5.8,0.4" stroke="#fff" stroke-width="1.2" stroke-linecap="round"/></svg>
<div class="t" style="left:1152px;top:366.43000000000006px;font-size:9px;font-weight:500;color:#fff;transform:scale(0.9222);transform-origin:0 0">编辑</div>
<div class="abs" style="left:1181.3px;top:360.83000000000004px;width:38px;height:14.8px;background:#ee1c2b;border-radius:2px"></div>
<svg class="abs" style="left:1187.7px;top:366.63000000000005px" width="6.4" height="6" viewBox="0 0 6.4 6"><path d="M0.2,1 L6.2,1" stroke="#fff" stroke-width="0.9"/><rect x="2.3" y="0" width="1.8" height="0.8" fill="#fff"/><path d="M1,1.8 L5.4,1.8 L5,6 L1.4,6 Z" fill="none" stroke="#fff" stroke-width="0.8"/><path d="M2.5,2.6 L2.5,5.2 M3.9,2.6 L3.9,5.2" stroke="#fff" stroke-width="0.6"/></svg>
<div class="t" style="left:1198.7px;top:366.43000000000006px;font-size:9px;font-weight:500;color:#fff;transform:scale(0.9222);transform-origin:0 0">删除</div>
<div class="abs" style="left:181.3px;top:387.79px;width:12.7px;height:12.5px;border:1px solid #dedede;background:#fff;border-radius:1.5px"></div>
<div class="t" style="left:214.6px;top:389.49px;font-size:9px;color:#666">72</div>
<div class="t" style="left:363.6px;top:389.49px;font-size:9px;color:#666">Count</div>
<div class="t" style="left:431.8px;top:389.49px;font-size:9px;color:#666">Count</div>
<div class="t" style="left:499.9px;top:389.49px;font-size:9px;color:#666">das</div>
<div class="t" style="left:562px;top:389.49px;font-size:9px;color:#666">order_ab</div>
<div class="t" style="left:623.7px;top:389.49px;font-size:9px;color:#666">uint64</div>
<div class="t" style="left:772.9px;top:389.49px;font-size:9px;color:#666">55802</div>
<div class="t" style="left:827.8px;top:389.49px;font-size:9px;color:#666">2025-03-1...</div>
<div class="t" style="left:901.3px;top:389.49px;font-size:9px;color:#666">1</div>
<div class="t" style="left:929.6px;top:389.49px;font-size:9px;color:#666">0</div>
<div class="t" style="left:957.6px;top:389.49px;font-size:9px;color:#666">VCNC001</div>
<div class="t" style="left:1026px;top:389.49px;font-size:9px;color:#666">cParam</div>
<div class="abs" style="left:1134.5px;top:387.29px;width:38px;height:14.8px;background:#1c94fc;border-radius:2px"></div>
<svg class="abs" style="left:1141px;top:393.09000000000003px" width="6.5" height="5.5" viewBox="0 0 6.5 5.5"><path d="M0.6,5.2 L5.8,0.4" stroke="#fff" stroke-width="1.2" stroke-linecap="round"/></svg>
<div class="t" style="left:1152px;top:392.89000000000004px;font-size:9px;font-weight:500;color:#fff;transform:scale(0.9222);transform-origin:0 0">编辑</div>
<div class="abs" style="left:1181.3px;top:387.29px;width:38px;height:14.8px;background:#ee1c2b;border-radius:2px"></div>
<svg class="abs" style="left:1187.7px;top:393.09000000000003px" width="6.4" height="6" viewBox="0 0 6.4 6"><path d="M0.2,1 L6.2,1" stroke="#fff" stroke-width="0.9"/><rect x="2.3" y="0" width="1.8" height="0.8" fill="#fff"/><path d="M1,1.8 L5.4,1.8 L5,6 L1.4,6 Z" fill="none" stroke="#fff" stroke-width="0.8"/><path d="M2.5,2.6 L2.5,5.2 M3.9,2.6 L3.9,5.2" stroke="#fff" stroke-width="0.6"/></svg>
<div class="t" style="left:1198.7px;top:392.89000000000004px;font-size:9px;font-weight:500;color:#fff;transform:scale(0.9222);transform-origin:0 0">删除</div>
<div class="abs" style="left:181.3px;top:414.25000000000006px;width:12.7px;height:12.5px;border:1px solid #dedede;background:#fff;border-radius:1.5px"></div>
<div class="t" style="left:214.6px;top:415.95000000000005px;font-size:9px;color:#666">73</div>
<div class="t" style="left:363.6px;top:415.95000000000005px;font-size:9px;color:#666">AlarmCode</div>
<div class="t" style="left:431.8px;top:415.95000000000005px;font-size:9px;color:#666">AlarmCode</div>
<div class="t" style="left:499.9px;top:415.95000000000005px;font-size:9px;color:#666">das</div>
<div class="t" style="left:562px;top:415.95000000000005px;font-size:9px;color:#666">order_ab</div>
<div class="t" style="left:623.7px;top:415.95000000000005px;font-size:9px;color:#666">uint64</div>
<div class="t" style="left:772.9px;top:415.95000000000005px;font-size:9px;color:#666">32768</div>
<div class="t" style="left:827.8px;top:415.95000000000005px;font-size:9px;color:#666">2025-03-1...</div>
<div class="t" style="left:901.3px;top:415.95000000000005px;font-size:9px;color:#666">1</div>
<div class="t" style="left:929.6px;top:415.95000000000005px;font-size:9px;color:#666">0</div>
<div class="t" style="left:957.6px;top:415.95000000000005px;font-size:9px;color:#666">VCNC001</div>
<div class="t" style="left:1026px;top:415.95000000000005px;font-size:9px;color:#666">cParam</div>
<div class="abs" style="left:1134.5px;top:413.75000000000006px;width:38px;height:14.8px;background:#1c94fc;border-radius:2px"></div>
<svg class="abs" style="left:1141px;top:419.55000000000007px" width="6.5" height="5.5" viewBox="0 0 6.5 5.5"><path d="M0.6,5.2 L5.8,0.4" stroke="#fff" stroke-width="1.2" stroke-linecap="round"/></svg>
<div class="t" style="left:1152px;top:419.3500000000001px;font-size:9px;font-weight:500;color:#fff;transform:scale(0.9222);transform-origin:0 0">编辑</div>
<div class="abs" style="left:1181.3px;top:413.75000000000006px;width:38px;height:14.8px;background:#ee1c2b;border-radius:2px"></div>
<svg class="abs" style="left:1187.7px;top:419.55000000000007px" width="6.4" height="6" viewBox="0 0 6.4 6"><path d="M0.2,1 L6.2,1" stroke="#fff" stroke-width="0.9"/><rect x="2.3" y="0" width="1.8" height="0.8" fill="#fff"/><path d="M1,1.8 L5.4,1.8 L5,6 L1.4,6 Z" fill="none" stroke="#fff" stroke-width="0.8"/><path d="M2.5,2.6 L2.5,5.2 M3.9,2.6 L3.9,5.2" stroke="#fff" stroke-width="0.6"/></svg>
<div class="t" style="left:1198.7px;top:419.3500000000001px;font-size:9px;font-weight:500;color:#fff;transform:scale(0.9222);transform-origin:0 0">删除</div>
<div class="abs" style="left:181.3px;top:440.71000000000004px;width:12.7px;height:12.5px;border:1px solid #dedede;background:#fff;border-radius:1.5px"></div>
<div class="t" style="left:214.6px;top:442.41px;font-size:9px;color:#666">74</div>
<div class="t" style="left:363.6px;top:442.41px;font-size:9px;color:#666">AlarmMe...</div>
<div class="t" style="left:431.8px;top:442.41px;font-size:9px;color:#666">AlarmMe...</div>
<div class="t" style="left:499.9px;top:442.41px;font-size:9px;color:#666">das</div>
<div class="t" style="left:562px;top:442.41px;font-size:9px;color:#666">order_ab</div>
<div class="t" style="left:623.7px;top:442.41px;font-size:9px;color:#666">string</div>
<div class="t" style="left:772.9px;top:442.41px;font-size:9px;color:#666">EMER...</div>
<div class="t" style="left:827.8px;top:442.41px;font-size:9px;color:#666">2025-03-1...</div>
<div class="t" style="left:901.3px;top:442.41px;font-size:9px;color:#666">1</div>
<div class="t" style="left:929.6px;top:442.41px;font-size:9px;color:#666">0</div>
<div class="t" style="left:957.6px;top:442.41px;font-size:9px;color:#666">VCNC001</div>
<div class="t" style="left:1026px;top:442.41px;font-size:9px;color:#666">cParam</div>
<div class="abs" style="left:1134.5px;top:440.21000000000004px;width:38px;height:14.8px;background:#1c94fc;border-radius:2px"></div>
<svg class="abs" style="left:1141px;top:446.01000000000005px" width="6.5" height="5.5" viewBox="0 0 6.5 5.5"><path d="M0.6,5.2 L5.8,0.4" stroke="#fff" stroke-width="1.2" stroke-linecap="round"/></svg>
<div class="t" style="left:1152px;top:445.81000000000006px;font-size:9px;font-weight:500;color:#fff;transform:scale(0.9222);transform-origin:0 0">编辑</div>
<div class="abs" style="left:1181.3px;top:440.21000000000004px;width:38px;height:14.8px;background:#ee1c2b;border-radius:2px"></div>
<svg class="abs" style="left:1187.7px;top:446.01000000000005px" width="6.4" height="6" viewBox="0 0 6.4 6"><path d="M0.2,1 L6.2,1" stroke="#fff" stroke-width="0.9"/><rect x="2.3" y="0" width="1.8" height="0.8" fill="#fff"/><path d="M1,1.8 L5.4,1.8 L5,6 L1.4,6 Z" fill="none" stroke="#fff" stroke-width="0.8"/><path d="M2.5,2.6 L2.5,5.2 M3.9,2.6 L3.9,5.2" stroke="#fff" stroke-width="0.6"/></svg>
<div class="t" style="left:1198.7px;top:445.81000000000006px;font-size:9px;font-weight:500;color:#fff;transform:scale(0.9222);transform-origin:0 0">删除</div>
<div class="abs" style="left:181.3px;top:467.17px;width:12.7px;height:12.5px;border:1px solid #dedede;background:#fff;border-radius:1.5px"></div>
<div class="t" style="left:214.6px;top:468.87px;font-size:9px;color:#666">75</div>
<div class="t" style="left:363.6px;top:468.87px;font-size:9px;color:#666">ToolNo</div>
<div class="t" style="left:431.8px;top:468.87px;font-size:9px;color:#666">ToolNo</div>
<div class="t" style="left:499.9px;top:468.87px;font-size:9px;color:#666">das</div>
<div class="t" style="left:562px;top:468.87px;font-size:9px;color:#666">order_ab</div>
<div class="t" style="left:623.7px;top:468.87px;font-size:9px;color:#666">uint64</div>
<div class="t" style="left:772.9px;top:468.87px;font-size:9px;color:#666">11</div>
<div class="t" style="left:827.8px;top:468.87px;font-size:9px;color:#666">2025-03-1...</div>
<div class="t" style="left:901.3px;top:468.87px;font-size:9px;color:#666">1</div>
<div class="t" style="left:929.6px;top:468.87px;font-size:9px;color:#666">0</div>
<div class="t" style="left:957.6px;top:468.87px;font-size:9px;color:#666">VCNC001</div>
<div class="t" style="left:1026px;top:468.87px;font-size:9px;color:#666">cParam</div>
<div class="abs" style="left:1134.5px;top:466.67px;width:38px;height:14.8px;background:#1c94fc;border-radius:2px"></div>
<svg class="abs" style="left:1141px;top:472.47px" width="6.5" height="5.5" viewBox="0 0 6.5 5.5"><path d="M0.6,5.2 L5.8,0.4" stroke="#fff" stroke-width="1.2" stroke-linecap="round"/></svg>
<div class="t" style="left:1152px;top:472.27000000000004px;font-size:9px;font-weight:500;color:#fff;transform:scale(0.9222);transform-origin:0 0">编辑</div>
<div class="abs" style="left:1181.3px;top:466.67px;width:38px;height:14.8px;background:#ee1c2b;border-radius:2px"></div>
<svg class="abs" style="left:1187.7px;top:472.47px" width="6.4" height="6" viewBox="0 0 6.4 6"><path d="M0.2,1 L6.2,1" stroke="#fff" stroke-width="0.9"/><rect x="2.3" y="0" width="1.8" height="0.8" fill="#fff"/><path d="M1,1.8 L5.4,1.8 L5,6 L1.4,6 Z" fill="none" stroke="#fff" stroke-width="0.8"/><path d="M2.5,2.6 L2.5,5.2 M3.9,2.6 L3.9,5.2" stroke="#fff" stroke-width="0.6"/></svg>
<div class="t" style="left:1198.7px;top:472.27000000000004px;font-size:9px;font-weight:500;color:#fff;transform:scale(0.9222);transform-origin:0 0">删除</div>
<div class="abs" style="left:181.3px;top:493.63000000000005px;width:12.7px;height:12.5px;border:1px solid #dedede;background:#fff;border-radius:1.5px"></div>
<div class="t" style="left:214.6px;top:495.33000000000004px;font-size:9px;color:#666">76</div>
<div class="t" style="left:363.6px;top:495.33000000000004px;font-size:9px;color:#666">PowerOn...</div>
<div class="t" style="left:431.8px;top:495.33000000000004px;font-size:9px;color:#666">PowerOn...</div>
<div class="t" style="left:499.9px;top:495.33000000000004px;font-size:9px;color:#666">das</div>
<div class="t" style="left:562px;top:495.33000000000004px;font-size:9px;color:#666">order_ab</div>
<div class="t" style="left:623.7px;top:495.33000000000004px;font-size:9px;color:#666">uint64</div>
<div class="t" style="left:772.9px;top:495.33000000000004px;font-size:9px;color:#666">575633</div>
<div class="t" style="left:827.8px;top:495.33000000000004px;font-size:9px;color:#666">2025-03-1...</div>
<div class="t" style="left:901.3px;top:495.33000000000004px;font-size:9px;color:#666">1</div>
<div class="t" style="left:929.6px;top:495.33000000000004px;font-size:9px;color:#666">0</div>
<div class="t" style="left:957.6px;top:495.33000000000004px;font-size:9px;color:#666">VCNC001</div>
<div class="t" style="left:1026px;top:495.33000000000004px;font-size:9px;color:#666">cParam</div>
<div class="abs" style="left:1134.5px;top:493.13000000000005px;width:38px;height:14.8px;background:#1c94fc;border-radius:2px"></div>
<svg class="abs" style="left:1141px;top:498.93000000000006px" width="6.5" height="5.5" viewBox="0 0 6.5 5.5"><path d="M0.6,5.2 L5.8,0.4" stroke="#fff" stroke-width="1.2" stroke-linecap="round"/></svg>
<div class="t" style="left:1152px;top:498.7300000000001px;font-size:9px;font-weight:500;color:#fff;transform:scale(0.9222);transform-origin:0 0">编辑</div>
<div class="abs" style="left:1181.3px;top:493.13000000000005px;width:38px;height:14.8px;background:#ee1c2b;border-radius:2px"></div>
<svg class="abs" style="left:1187.7px;top:498.93000000000006px" width="6.4" height="6" viewBox="0 0 6.4 6"><path d="M0.2,1 L6.2,1" stroke="#fff" stroke-width="0.9"/><rect x="2.3" y="0" width="1.8" height="0.8" fill="#fff"/><path d="M1,1.8 L5.4,1.8 L5,6 L1.4,6 Z" fill="none" stroke="#fff" stroke-width="0.8"/><path d="M2.5,2.6 L2.5,5.2 M3.9,2.6 L3.9,5.2" stroke="#fff" stroke-width="0.6"/></svg>
<div class="t" style="left:1198.7px;top:498.7300000000001px;font-size:9px;font-weight:500;color:#fff;transform:scale(0.9222);transform-origin:0 0">删除</div>
<div class="abs" style="left:181.3px;top:520.0899999999999px;width:12.7px;height:12.5px;border:1px solid #dedede;background:#fff;border-radius:1.5px"></div>
<div class="t" style="left:214.6px;top:521.79px;font-size:9px;color:#666">77</div>
<div class="t" style="left:363.6px;top:521.79px;font-size:9px;color:#666">RuningTi...</div>
<div class="t" style="left:431.8px;top:521.79px;font-size:9px;color:#666">RuningTi...</div>
<div class="t" style="left:499.9px;top:521.79px;font-size:9px;color:#666">das</div>
<div class="t" style="left:562px;top:521.79px;font-size:9px;color:#666">order_ab</div>
<div class="t" style="left:623.7px;top:521.79px;font-size:9px;color:#666">uint64</div>
<div class="t" style="left:772.9px;top:521.79px;font-size:9px;color:#666">68508</div>
<div class="t" style="left:827.8px;top:521.79px;font-size:9px;color:#666">2025-03-1...</div>
<div class="t" style="left:901.3px;top:521.79px;font-size:9px;color:#666">1</div>
<div class="t" style="left:929.6px;top:521.79px;font-size:9px;color:#666">0</div>
<div class="t" style="left:957.6px;top:521.79px;font-size:9px;color:#666">VCNC001</div>
<div class="t" style="left:1026px;top:521.79px;font-size:9px;color:#666">cParam</div>
<div class="abs" style="left:1134.5px;top:519.5899999999999px;width:38px;height:14.8px;background:#1c94fc;border-radius:2px"></div>
<svg class="abs" style="left:1141px;top:525.3899999999999px" width="6.5" height="5.5" viewBox="0 0 6.5 5.5"><path d="M0.6,5.2 L5.8,0.4" stroke="#fff" stroke-width="1.2" stroke-linecap="round"/></svg>
<div class="t" style="left:1152px;top:525.1899999999999px;font-size:9px;font-weight:500;color:#fff;transform:scale(0.9222);transform-origin:0 0">编辑</div>
<div class="abs" style="left:1181.3px;top:519.5899999999999px;width:38px;height:14.8px;background:#ee1c2b;border-radius:2px"></div>
<svg class="abs" style="left:1187.7px;top:525.3899999999999px" width="6.4" height="6" viewBox="0 0 6.4 6"><path d="M0.2,1 L6.2,1" stroke="#fff" stroke-width="0.9"/><rect x="2.3" y="0" width="1.8" height="0.8" fill="#fff"/><path d="M1,1.8 L5.4,1.8 L5,6 L1.4,6 Z" fill="none" stroke="#fff" stroke-width="0.8"/><path d="M2.5,2.6 L2.5,5.2 M3.9,2.6 L3.9,5.2" stroke="#fff" stroke-width="0.6"/></svg>
<div class="t" style="left:1198.7px;top:525.1899999999999px;font-size:9px;font-weight:500;color:#fff;transform:scale(0.9222);transform-origin:0 0">删除</div>
<div class="abs" style="left:181.3px;top:546.55px;width:12.7px;height:12.5px;border:1px solid #dedede;background:#fff;border-radius:1.5px"></div>
<div class="t" style="left:214.6px;top:548.25px;font-size:9px;color:#666">78</div>
<div class="t" style="left:363.6px;top:548.25px;font-size:9px;color:#666">CuttingTi...</div>
<div class="t" style="left:431.8px;top:548.25px;font-size:9px;color:#666">CuttingTi...</div>
<div class="t" style="left:499.9px;top:548.25px;font-size:9px;color:#666">das</div>
<div class="t" style="left:562px;top:548.25px;font-size:9px;color:#666">order_ab</div>
<div class="t" style="left:623.7px;top:548.25px;font-size:9px;color:#666">uint64</div>
<div class="t" style="left:772.9px;top:548.25px;font-size:9px;color:#666">159025</div>
<div class="t" style="left:827.8px;top:548.25px;font-size:9px;color:#666">2025-03-1...</div>
<div class="t" style="left:901.3px;top:548.25px;font-size:9px;color:#666">1</div>
<div class="t" style="left:929.6px;top:548.25px;font-size:9px;color:#666">0</div>
<div class="t" style="left:957.6px;top:548.25px;font-size:9px;color:#666">VCNC001</div>
<div class="t" style="left:1026px;top:548.25px;font-size:9px;color:#666">cParam</div>
<div class="abs" style="left:1134.5px;top:546.05px;width:38px;height:14.8px;background:#1c94fc;border-radius:2px"></div>
<svg class="abs" style="left:1141px;top:551.8499999999999px" width="6.5" height="5.5" viewBox="0 0 6.5 5.5"><path d="M0.6,5.2 L5.8,0.4" stroke="#fff" stroke-width="1.2" stroke-linecap="round"/></svg>
<div class="t" style="left:1152px;top:551.65px;font-size:9px;font-weight:500;color:#fff;transform:scale(0.9222);transform-origin:0 0">编辑</div>
<div class="abs" style="left:1181.3px;top:546.05px;width:38px;height:14.8px;background:#ee1c2b;border-radius:2px"></div>
<svg class="abs" style="left:1187.7px;top:551.8499999999999px" width="6.4" height="6" viewBox="0 0 6.4 6"><path d="M0.2,1 L6.2,1" stroke="#fff" stroke-width="0.9"/><rect x="2.3" y="0" width="1.8" height="0.8" fill="#fff"/><path d="M1,1.8 L5.4,1.8 L5,6 L1.4,6 Z" fill="none" stroke="#fff" stroke-width="0.8"/><path d="M2.5,2.6 L2.5,5.2 M3.9,2.6 L3.9,5.2" stroke="#fff" stroke-width="0.6"/></svg>
<div class="t" style="left:1198.7px;top:551.65px;font-size:9px;font-weight:500;color:#fff;transform:scale(0.9222);transform-origin:0 0">删除</div>
<div class="abs" style="left:181.3px;top:573.01px;width:12.7px;height:12.5px;border:1px solid #dedede;background:#fff;border-radius:1.5px"></div>
<div class="t" style="left:214.6px;top:574.71px;font-size:9px;color:#666">79</div>
<div class="t" style="left:363.6px;top:574.71px;font-size:9px;color:#666">CycleTime</div>
<div class="t" style="left:431.8px;top:574.71px;font-size:9px;color:#666">CycleTime</div>
<div class="t" style="left:499.9px;top:574.71px;font-size:9px;color:#666">das</div>
<div class="t" style="left:562px;top:574.71px;font-size:9px;color:#666">order_ab</div>
<div class="t" style="left:623.7px;top:574.71px;font-size:9px;color:#666">uint64</div>
<div class="t" style="left:772.9px;top:574.71px;font-size:9px;color:#666">575633</div>
<div class="t" style="left:827.8px;top:574.71px;font-size:9px;color:#666">2025-03-1...</div>
<div class="t" style="left:901.3px;top:574.71px;font-size:9px;color:#666">1</div>
<div class="t" style="left:929.6px;top:574.71px;font-size:9px;color:#666">0</div>
<div class="t" style="left:957.6px;top:574.71px;font-size:9px;color:#666">VCNC001</div>
<div class="t" style="left:1026px;top:574.71px;font-size:9px;color:#666">cParam</div>
<div class="abs" style="left:1134.5px;top:572.51px;width:38px;height:14.8px;background:#1c94fc;border-radius:2px"></div>
<svg class="abs" style="left:1141px;top:578.31px" width="6.5" height="5.5" viewBox="0 0 6.5 5.5"><path d="M0.6,5.2 L5.8,0.4" stroke="#fff" stroke-width="1.2" stroke-linecap="round"/></svg>
<div class="t" style="left:1152px;top:578.11px;font-size:9px;font-weight:500;color:#fff;transform:scale(0.9222);transform-origin:0 0">编辑</div>
<div class="abs" style="left:1181.3px;top:572.51px;width:38px;height:14.8px;background:#ee1c2b;border-radius:2px"></div>
<svg class="abs" style="left:1187.7px;top:578.31px" width="6.4" height="6" viewBox="0 0 6.4 6"><path d="M0.2,1 L6.2,1" stroke="#fff" stroke-width="0.9"/><rect x="2.3" y="0" width="1.8" height="0.8" fill="#fff"/><path d="M1,1.8 L5.4,1.8 L5,6 L1.4,6 Z" fill="none" stroke="#fff" stroke-width="0.8"/><path d="M2.5,2.6 L2.5,5.2 M3.9,2.6 L3.9,5.2" stroke="#fff" stroke-width="0.6"/></svg>
<div class="t" style="left:1198.7px;top:578.11px;font-size:9px;font-weight:500;color:#fff;transform:scale(0.9222);transform-origin:0 0">删除</div>
<div class="abs" style="left:132px;top:590px;width:1136px;height:6px;background:#fff"></div>
</body></html>
